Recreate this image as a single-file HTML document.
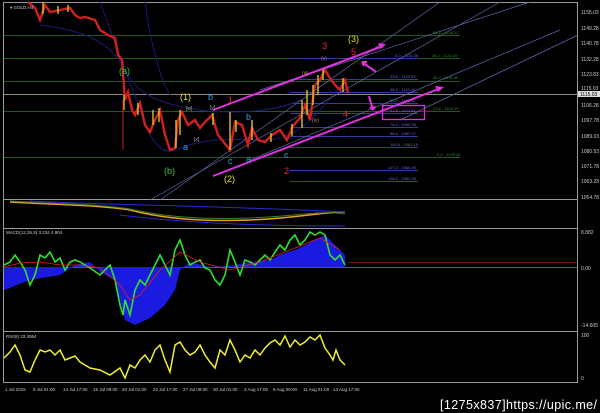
<!DOCTYPE html>
<html><head><meta charset="utf-8"><style>
html,body{margin:0;padding:0;background:#000;width:600px;height:413px;overflow:hidden}
svg{display:block}
text{font-family:"Liberation Sans",sans-serif}
</style></head><body>
<svg width="600" height="413" viewBox="0 0 600 413" xmlns="http://www.w3.org/2000/svg">
<rect width="600" height="413" fill="#000"/>
<g stroke="#9a9a9a" fill="none" stroke-width="1">
<rect x="3.5" y="2.5" width="574" height="380"/>
<line x1="3" y1="199.5" x2="578" y2="199.5"/>
<line x1="3" y1="228.5" x2="578" y2="228.5"/>
<line x1="3" y1="331.5" x2="578" y2="331.5"/>
</g>
<g stroke="#1f5a1f" stroke-width="1">
<line x1="4" y1="35.5" x2="460" y2="35.5"/>
<line x1="4" y1="58.5" x2="460" y2="58.5"/>
<line x1="4" y1="81.5" x2="460" y2="81.5"/>
<line x1="4" y1="111.5" x2="460" y2="111.5"/>
<line x1="4" y1="157.5" x2="460" y2="157.5"/>
</g>
<line x1="4" y1="94.5" x2="577" y2="94.5" stroke="#888"/>
<g stroke="#3a3a9a" stroke-width="1">
<line x1="290" y1="58.5" x2="418" y2="58.5"/>
<line x1="290" y1="79.5" x2="418" y2="79.5"/>
<line x1="290" y1="92.5" x2="418" y2="92.5"/>
<line x1="290" y1="103.5" x2="418" y2="103.5"/>
<line x1="290" y1="113.5" x2="418" y2="113.5"/>
<line x1="290" y1="127.5" x2="418" y2="127.5"/>
<line x1="290" y1="136.5" x2="418" y2="136.5"/>
<line x1="290" y1="147.5" x2="418" y2="147.5"/>
<line x1="290" y1="170.5" x2="418" y2="170.5"/>
<line x1="290" y1="181.5" x2="418" y2="181.5"/>
</g>
<g font-size="4" fill="#6a6ad0">
<text x="395" y="57">0.0 - 1132.28</text><text x="390" y="78">23.6 - 1120.53</text>
<text x="390" y="91">38.2 - 1115.20</text><text x="390" y="102">50.0 - 1109.42</text>
<text x="390" y="112">61.8 - 1103.94</text><text x="390" y="126">76.4 - 1092.96</text>
<text x="390" y="135">88.6 - 1087.07</text><text x="390" y="146">100.0 - 1081.15</text>
<text x="388" y="169">127.2 - 1068.40</text><text x="388" y="180">138.2 - 1062.95</text>
</g>
<g font-size="4" fill="#2e8a2e">
<text x="433" y="34">61.8 - 1148.32</text><text x="432" y="57">38.2 - 1132.49</text>
<text x="433" y="79">38.2 - 1118.85</text><text x="433" y="110">23.6 - 1103.10</text>
<text x="437" y="156">0.0 - 1075.46</text>
</g>
<g font-size="5" fill="#ccc">
<text x="581" y="14">1155.03</text><text x="581" y="30">1149.28</text><text x="581" y="45">1140.78</text>
<text x="581" y="61">1132.28</text><text x="581" y="76">1123.83</text><text x="581" y="90">1115.03</text>
<text x="581" y="107">1106.28</text><text x="581" y="122">1097.78</text><text x="581" y="138">1089.03</text>
<text x="581" y="153">1080.53</text><text x="581" y="168">1071.78</text><text x="581" y="183">1063.28</text>
<text x="581" y="199">1054.78</text>
<text x="581" y="234">8.882</text><text x="581" y="270">0.00</text><text x="581" y="327">-14.605</text>
<text x="581" y="337">100</text><text x="581" y="380">0</text>
</g>
<rect x="578" y="91" width="22" height="6" fill="#ddd"/>
<text x="580" y="96" font-size="5" fill="#000">1115.03</text>
<g fill="none" stroke="#1a1a7a" stroke-width="1">
<path d="M100,2 C110,30 125,70 140,110 C150,140 160,155 175,150 C200,140 220,138 260,140 C300,142 320,110 345,80"/>
<path d="M40,25 C80,30 110,40 125,70 C140,100 170,105 200,110 C240,115 280,110 300,100"/>
<path d="M145,2 C150,40 160,80 170,95"/>
</g>
<g fill="none" stroke="#5a6aa8" stroke-width="0.7">
<line x1="160" y1="200" x2="440" y2="2"/>
<line x1="150" y1="200" x2="500" y2="2"/>
<line x1="250" y1="160" x2="560" y2="30"/>
<line x1="400" y1="120" x2="578" y2="35"/>
<line x1="260" y1="90" x2="530" y2="2"/>
</g>
<polyline fill="none" stroke="#d02020" stroke-width="2.4" points="28,2 35,8 40,20 45,5 50,12 60,10 70,8 75,15 80,18 85,17 95,20 100,30 108,35 115,38 118,55 122,60 125,100 128,92 132,110 135,115 140,103 145,125 150,132 155,120 160,110 165,135 170,150 175,148 178,120 182,112 188,125 195,120 200,128 205,122 212,115 218,135 222,140 230,150 235,122 242,125 248,145 252,128 258,140 265,142 272,135 280,130 287,140 293,126 300,118 305,105 310,120 315,85 320,80 325,70 330,78 335,85 340,90 345,80 348,93"/>
<g stroke="#e8d030" stroke-width="1.3">
<line x1="43" y1="2" x2="43" y2="14"/><line x1="124" y1="95" x2="124" y2="110"/><line x1="153" y1="110" x2="153" y2="125"/>
<line x1="180" y1="110" x2="180" y2="135"/><line x1="230" y1="112" x2="230" y2="150"/><line x1="252" y1="120" x2="252" y2="140"/>
<line x1="302" y1="100" x2="302" y2="128"/><line x1="307" y1="90" x2="307" y2="115"/><line x1="318" y1="75" x2="318" y2="95"/><line x1="343" y1="78" x2="343" y2="92"/>
<line x1="138" y1="103" x2="138" y2="115"/><line x1="159" y1="108" x2="159" y2="122"/><line x1="176" y1="120" x2="176" y2="148"/>
<line x1="213" y1="113" x2="213" y2="125"/><line x1="236" y1="120" x2="236" y2="132"/><line x1="271" y1="133" x2="271" y2="142"/>
<line x1="292" y1="124" x2="292" y2="136"/><line x1="313" y1="85" x2="313" y2="105"/><line x1="323" y1="68" x2="323" y2="80"/>
<line x1="58" y1="6" x2="58" y2="14"/><line x1="68" y1="5" x2="68" y2="12"/>
</g>
<line x1="123" y1="100" x2="123" y2="150" stroke="#c02020"/>
<g stroke="#e030e0" stroke-width="2" fill="none">
<line x1="213" y1="110" x2="383" y2="46"/>
<line x1="213" y1="176" x2="441" y2="88"/>
<path d="M376,72 L362,62 M362,62 l5,0 M362,62 l2,4"/>
<path d="M369,96 L373,110 M373,110 l-3,-3 M373,110 l2,-4"/>
</g>
<polygon points="386,44 378,43 381,49" fill="#e030e0"/>
<polygon points="444,87 435,86 438,92" fill="#e030e0"/>
<rect x="382.5" y="105.5" width="42" height="14" fill="none" stroke="#e030e0" stroke-width="1.3"/>
<g font-size="9">
<text x="348" y="42" fill="#e8e020">(3)</text><text x="322" y="49" fill="#e03030">3</text>
<text x="351" y="55" fill="#e03030">5</text><text x="343" y="117" fill="#e03030">4</text>
<text x="180" y="100" fill="#e8e020">(1)</text><text x="208" y="100" fill="#30a0e0">b</text>
<text x="228" y="103" fill="#e03030">1</text><text x="246" y="120" fill="#30a0e0">b</text>
<text x="119" y="74" fill="#40c040">(a)</text><text x="164" y="174" fill="#40c040">(b)</text>
<text x="224" y="182" fill="#e8e020">(2)</text><text x="284" y="174" fill="#e03030">2</text>
<text x="228" y="164" fill="#30a0e0">c</text><text x="246" y="162" fill="#30a0e0">a</text>
<text x="284" y="158" fill="#30a0e0">c</text><text x="183" y="150" fill="#30a0e0">a</text>
</g>
<g font-size="5" fill="#aaa">
<text x="186" y="110">[w]</text><text x="210" y="109">[y]</text><text x="194" y="141">[x]</text>
<text x="321" y="60" fill="#c09060">(v)</text><text x="302" y="75" fill="#c09060">(iii)</text><text x="312" y="122" fill="#c09060">(iv)</text>
</g>
<text x="10" y="9" font-size="4.5" fill="#ccc">▾ GOLD,H4</text>
<g fill="none" stroke-width="1">
<path d="M10,202 C60,205 100,205 130,210 C160,218 200,222 250,220 C300,218 320,212 345,212" stroke="#e0a020" stroke-width="1.5"/>
<path d="M10,201 C60,204 100,204 130,209 C160,216 200,220 250,218 C300,216 320,210 345,214" stroke="#3a7a3a"/>
<path d="M30,201 C100,205 200,205 345,212" stroke="#2a2ad0"/>
<path d="M120,215 C200,225 300,226 345,226" stroke="#2a2ad0"/>
</g>
<text x="6" y="234" font-size="4.5" fill="#ccc">MACD(12,26,9) 3.234 4.904</text>
<line x1="4" y1="267.5" x2="577" y2="267.5" stroke="#3a5a9a"/>
<line x1="348" y1="262.5" x2="577" y2="262.5" stroke="#6a1a1a"/>
<path d="M4,267 L4,290 L30,280 L60,275 L75,265 L90,262 L100,272 L115,280 L125,320 L135,325 L150,318 L165,305 L175,290 L180,270 L190,262 L210,267 L225,266 L235,265 L250,262 L270,260 L280,255 L300,248 L315,240 L325,235 L335,245 L345,255 L345,267 Z" fill="#1a1ae0"/>
<polyline fill="none" stroke="#30e030" stroke-width="1.6" points="4,265 10,262 15,255 20,262 25,270 30,285 35,275 40,255 45,258 50,252 55,262 60,258 65,270 70,262 75,260 80,262 90,268 100,275 110,265 115,280 120,305 123,315 125,300 130,315 135,290 140,280 145,285 150,275 155,265 160,255 165,265 170,275 175,250 180,240 185,255 190,265 195,262 200,260 205,268 210,270 215,280 220,285 225,275 230,250 235,262 240,275 245,260 250,262 255,265 260,260 265,255 270,260 275,252 280,245 285,250 290,240 295,235 300,245 305,240 310,232 315,235 320,232 325,235 330,255 335,260 340,255 345,265"/>
<polyline fill="none" stroke="#e02020" stroke-width="0.8" points="4,267 20,263 40,262 60,265 80,265 100,268 120,285 130,300 140,295 160,270 180,252 200,262 230,270 260,262 290,250 320,238 340,250"/>
<text x="6" y="338" font-size="4.5" fill="#ccc">RSI(8) 33.3064</text>
<polyline fill="none" stroke="#f0f030" stroke-width="1.5" points="4,358 10,352 15,345 20,355 25,370 30,372 35,360 40,350 45,352 50,350 55,355 60,350 65,360 70,358 75,356 80,362 90,368 100,370 110,375 120,368 125,378 130,365 135,368 140,360 145,355 150,362 155,350 160,345 165,360 170,372 175,345 180,342 185,350 190,355 195,352 200,345 205,355 210,362 215,368 220,350 225,355 230,340 235,350 240,362 245,355 250,358 255,350 260,355 265,348 270,343 275,340 280,345 285,336 290,347 295,340 300,345 305,342 310,337 315,340 320,335 325,348 330,355 333,360 336,350 340,360 345,365"/>
<g font-size="4.5" fill="#ccc">
<text x="5" y="391">1 Jul 2015</text><text x="33" y="391">9 Jul 01:00</text><text x="63" y="391">14 Jul 17:00</text>
<text x="93" y="391">15 Jul 09:00</text><text x="122" y="391">20 Jul 01:00</text><text x="153" y="391">22 Jul 17:00</text>
<text x="183" y="391">27 Jul 09:00</text><text x="213" y="391">30 Jul 01:00</text><text x="244" y="391">3 Aug 17:00</text>
<text x="273" y="391">6 Aug 09:00</text><text x="303" y="391">11 Aug 01:00</text><text x="333" y="391">13 Aug 17:00</text>
</g>
<text x="440" y="409" font-size="12.5" fill="#fff" font-family="Liberation Mono, monospace" textLength="157">[1275x837]https://upic.me/</text>
</svg>
</body></html>
